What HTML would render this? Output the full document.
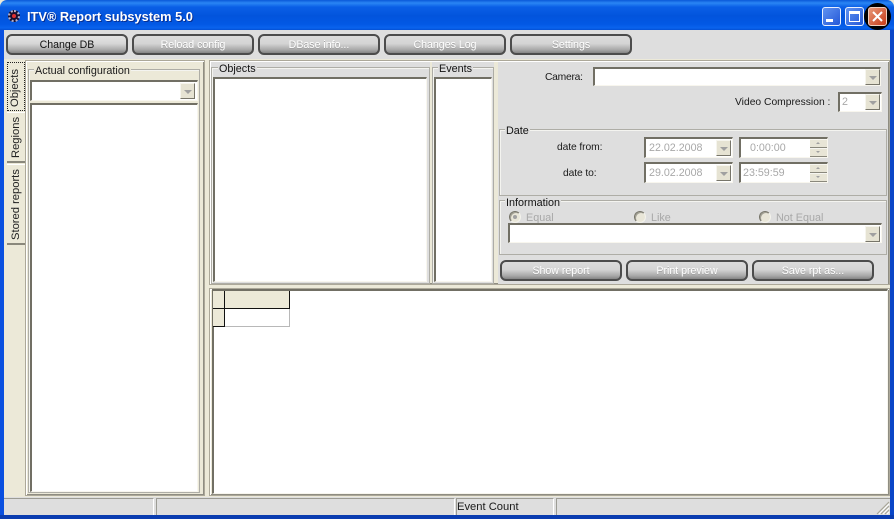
<!DOCTYPE html>
<html><head><meta charset="utf-8"><style>
html,body{margin:0;padding:0;width:894px;height:519px;overflow:hidden;background:#ece9d8}
body{position:relative;font-family:"Liberation Sans",sans-serif;font-size:10.8px;color:#1a1a1a}
div,span{position:absolute;box-sizing:border-box;white-space:nowrap}
.btn{top:34px;width:122px;height:21px;border:2px solid #4c4c4c;border-radius:6px;background:linear-gradient(#dcdcdc 0%,#d4d4d4 45%,#a9a9a9 80%,#858585 100%);text-align:center;line-height:19px;color:#fff;font-size:10.6px;text-shadow:0 1px 0 #a0a0a0}
.btn.on{color:#111;text-shadow:none;background:linear-gradient(#e4e4e4 0%,#d6d6d6 45%,#ababab 80%,#858585 100%)}
.sunk{background:#fff;border-top:2px solid #716f64;border-left:2px solid #716f64;border-right:1px solid #f8f6ee;border-bottom:1px solid #f8f6ee}
.raised{border:1px solid #aca899;box-shadow:inset 1px 1px 0 #fff,inset -1px -1px 0 #8f8d82}
.gb{border:1px solid #aeada6;box-shadow:inset 1px 1px 0 #f4f4f0}
.lg{background:#dedede;line-height:12px;padding:0 1px;color:#111}
.lg2{background:#ece9d8;line-height:12px;padding:0 1px}
.dd{width:15px;background:#e6e3d3;border:1px solid;border-color:#f6f5ee #77756a #77756a #f6f5ee}
.dd:after{content:"";position:absolute;left:3px;top:6px;border:4px solid transparent;border-top:4px solid #a0a0a0;border-bottom:0}
.dis{color:#a8a8a8}
.tab{left:7px;width:18px;background:#ece9d8;border-bottom:2px solid #8a887c;border-top:1px solid #fff}
.tt{transform:rotate(-90deg);transform-origin:0 0;line-height:14px;color:#222;font-size:11.2px}
.sp{width:17px;height:9px;background:#e8e5d6;border-top:1px solid #f7f6f0;border-bottom:1px solid #8a887c}
.sp:after{content:"";position:absolute;left:6px;top:2px;border:2px solid transparent}
.up:after{border-bottom:2px solid #a0a0a0;border-top:0}
.dn:after{border-top:2px solid #a0a0a0;border-bottom:0}
.rad{width:12px;height:12px;border-radius:50%;background:#e9e6d8;border:1px solid;border-color:#77756a #f4f3ec #f4f3ec #77756a;box-shadow:inset 1px 1px 0 #a09e92}
.lbl{font-size:10.3px}
.val{font-size:10.7px;color:#a8a8a8}
</style></head><body>

<!-- title bar -->
<div style="left:0;top:0;width:894px;height:30px;border-radius:7px 7px 0 0;background:linear-gradient(#0a58d8 0,#2a86f4 3px,#0a5fe6 7px,#0254dc 16px,#0258e4 24px,#0a63ee 28px,#0350d4 30px)"></div>
<div style="left:8px;top:10px;width:12px;height:12px;border-radius:50%;background:#1a1030;border:2px dotted #b8b0c8"></div>
<div style="left:12px;top:14px;width:4px;height:4px;border-radius:50%;background:#e03030"></div>
<div style="left:27px;top:8px;font-size:12.8px;font-weight:bold;color:#fff;line-height:18px;text-shadow:1px 1px 0 #0a2f90">ITV® Report subsystem 5.0</div>

<div style="left:822px;top:7px;width:19px;height:19px;border:1px solid #e8f0ff;border-radius:3px;background:linear-gradient(135deg,#5f92f0,#2458d8)"></div>
<div style="left:826px;top:19px;width:7px;height:3px;background:#fff"></div>
<div style="left:845px;top:7px;width:19px;height:19px;border:1px solid #e8f0ff;border-radius:3px;background:linear-gradient(135deg,#5f92f0,#2458d8)"></div>
<div style="left:849px;top:11px;width:11px;height:11px;border:1px solid #fff;border-top-width:3px"></div>
<div style="left:864px;top:3px;width:27px;height:27px;border-radius:50%;background:#000"></div>
<div style="left:868px;top:7px;width:19px;height:19px;border:1px solid #f0d0c0;border-radius:3px;background:linear-gradient(135deg,#e89878,#c83c18)"></div>
<svg style="position:absolute;left:868px;top:7px" width="19" height="19"><path d="M5 5L14 14M14 5L5 14" stroke="#fff" stroke-width="2"/></svg>

<!-- frame -->
<div style="left:0;top:30px;width:4px;height:489px;background:#0a50e0"></div>
<div style="left:890px;top:30px;width:4px;height:489px;background:#0a46c8"></div>
<div style="left:0;top:515px;width:894px;height:4px;background:#0a3cb0"></div>

<!-- toolbar -->
<div style="left:4px;top:30px;width:886px;height:29px;background:#dedede"></div>
<div class="btn on" style="left:6px">Change DB</div>
<div class="btn" style="left:132px">Reload config</div>
<div class="btn" style="left:258px">DBase info...</div>
<div class="btn" style="left:384px">Changes Log</div>
<div class="btn" style="left:510px">Settings</div>

<!-- tab strip -->
<div style="left:4px;top:59px;width:886px;height:438px;background:#ece9d8"></div>
<div class="tab" style="top:62px;height:49px;border:1px dotted #222"></div>
<div class="tt" style="left:8px;top:107px">Objects</div>
<div class="tab" style="top:112px;height:51px"></div>
<div class="tt" style="left:9px;top:158px">Regions</div>
<div class="tab" style="top:164px;height:81px"></div>
<div class="tt" style="left:9px;top:240px">Stored reports</div>

<!-- left panel -->
<div class="raised" style="left:25px;top:60px;width:180px;height:436px;background:#ece9d8"></div>
<div class="gb" style="left:28px;top:69px;width:172px;height:424px"></div>
<div class="lg2" style="left:34px;top:65px">Actual configuration</div>
<div class="sunk" style="left:30px;top:80px;width:168px;height:21px"></div>
<div class="dd" style="left:180px;top:83px;height:16px"></div>
<div class="sunk" style="left:30px;top:103px;width:168px;height:389px"></div>

<!-- middle top panels -->
<div class="raised" style="left:209px;top:60px;width:681px;height:225px;background:#ece9d8"></div>
<div style="left:211px;top:62px;width:219px;height:222px;background:#dedede"></div>
<div class="gb" style="left:211px;top:67px;width:219px;height:217px"></div>
<div class="lg" style="left:218px;top:63px">Objects</div>
<div class="sunk" style="left:213px;top:77px;width:214px;height:205px"></div>

<div style="left:432px;top:62px;width:62px;height:222px;background:#dedede"></div>
<div class="gb" style="left:432px;top:67px;width:62px;height:217px"></div>
<div class="lg" style="left:438px;top:63px">Events</div>
<div class="sunk" style="left:434px;top:77px;width:58px;height:205px"></div>

<!-- right panel -->
<div style="left:498px;top:62px;width:390px;height:222px;background:#dedede"></div>
<div class="lbl" style="left:545px;top:71px;line-height:14px;letter-spacing:-.25px">Camera:</div>
<div class="sunk" style="left:593px;top:67px;width:288px;height:19px"></div>
<div class="dd" style="left:865px;top:69px;height:16px"></div>
<div class="lbl" style="left:735px;top:96px;line-height:14px">Video Compression :</div>
<div class="sunk val" style="left:838px;top:92px;width:44px;height:20px;padding-left:2px;line-height:16px">2</div>
<div class="dd" style="left:865px;top:94px;height:16px"></div>

<div class="gb" style="left:499px;top:129px;width:388px;height:67px"></div>
<div class="lg" style="left:505px;top:125px">Date</div>
<div class="lbl" style="left:557px;top:141px;line-height:14px;letter-spacing:-.1px">date from:</div>
<div class="lbl" style="left:563px;top:167px;line-height:14px;letter-spacing:-.1px">date to:</div>
<div class="sunk val" style="left:644px;top:137px;width:89px;height:21px;padding-left:3px;line-height:18px">22.02.2008</div>
<div class="dd" style="left:716px;top:140px;height:16px"></div>
<div class="sunk val" style="left:739px;top:137px;width:89px;height:21px;padding-left:9px;line-height:18px">0:00:00</div>
<div class="sp up" style="left:810px;top:139px"></div><div class="sp dn" style="left:810px;top:148px"></div>
<div class="sunk val" style="left:644px;top:162px;width:89px;height:21px;padding-left:3px;line-height:18px">29.02.2008</div>
<div class="dd" style="left:716px;top:165px;height:16px"></div>
<div class="sunk val" style="left:739px;top:162px;width:89px;height:21px;padding-left:2px;line-height:18px">23:59:59</div>
<div class="sp up" style="left:810px;top:164px"></div><div class="sp dn" style="left:810px;top:173px"></div>

<div class="gb" style="left:499px;top:200px;width:388px;height:55px"></div>
<div class="lg" style="left:505px;top:197px">Information</div>
<div class="rad" style="left:509px;top:211px"></div>
<div style="left:513px;top:215px;width:4px;height:4px;border-radius:50%;background:#a0a0a0"></div>
<div class="dis" style="left:526px;top:211px;line-height:14px">Equal</div>
<div class="rad" style="left:634px;top:211px"></div>
<div class="dis" style="left:651px;top:211px;line-height:14px">Like</div>
<div class="rad" style="left:759px;top:211px"></div>
<div class="dis" style="left:776px;top:211px;line-height:14px">Not Equal</div>
<div class="sunk" style="left:508px;top:223px;width:374px;height:20px"></div>
<div class="dd" style="left:865px;top:226px;height:16px"></div>

<div class="btn" style="left:500px;top:260px">Show report</div>
<div class="btn" style="left:626px;top:260px">Print preview</div>
<div class="btn" style="left:752px;top:260px">Save rpt as...</div>

<!-- report grid -->
<div class="raised" style="left:209px;top:288px;width:681px;height:208px;background:#ece9d8"></div>
<div class="sunk" style="left:212px;top:289px;width:676px;height:205px"></div>
<div style="left:213px;top:291px;width:12px;height:18px;background:#ece9d8;border-right:1px solid #111;border-bottom:1px solid #111"></div>
<div style="left:225px;top:291px;width:65px;height:18px;background:#ece9d8;border-right:1px solid #111;border-bottom:1px solid #111"></div>
<div style="left:213px;top:309px;width:12px;height:18px;background:#ece9d8;border-right:1px solid #111;border-bottom:1px solid #111"></div>
<div style="left:225px;top:309px;width:65px;height:18px;background:#fff;border-right:1px solid #b8b8b8;border-bottom:1px solid #b8b8b8"></div>

<!-- status bar -->
<div style="left:4px;top:497px;width:886px;height:18px;background:#dedede"></div>
<div style="left:4px;top:498px;width:150px;height:17px;border-top:1px solid #9c9c94;border-right:1px solid #fff"></div>
<div style="left:156px;top:498px;width:299px;height:17px;border-top:1px solid #9c9c94;border-left:1px solid #9c9c94;border-right:1px solid #fff"></div>
<div style="left:456px;top:498px;width:98px;height:17px;border-top:1px solid #9c9c94;border-left:1px solid #9c9c94;border-right:1px solid #fff;line-height:17px;padding-left:0;font-size:11.2px">Event Count</div>
<div style="left:556px;top:498px;width:334px;height:17px;border-top:1px solid #9c9c94;border-left:1px solid #9c9c94"></div>
<svg style="position:absolute;left:876px;top:501px" width="14" height="14"><path d="M13 1L1 13M13 5L5 13M13 9L9 13" stroke="#a8a698" stroke-width="1.2" fill="none"/><path d="M13 3L3 13M13 7L7 13M13 11L11 13" stroke="#fff" stroke-width="1" fill="none"/></svg>
</body></html>
